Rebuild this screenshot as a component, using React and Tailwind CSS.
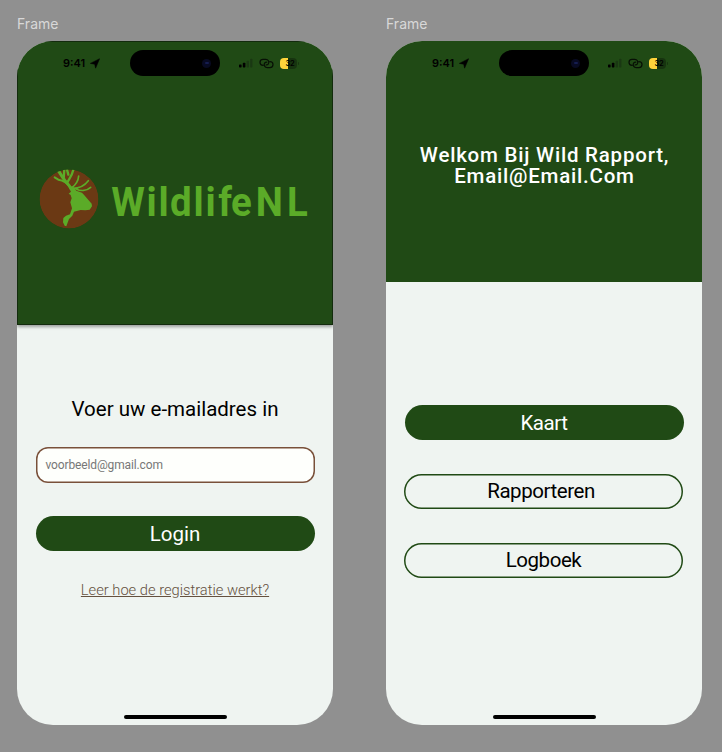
function StatusBar() {
  return (
    <div className="flex h-[44px] items-center">
      <span className="ml-[46px] w-[22px] whitespace-nowrap pt-px font-['Inter',sans-serif] text-[11px] font-semibold leading-none text-black">9:41</span>
      <svg className="ml-[5px] h-[11px] w-[10px]" viewBox="0 0 10 11">
        <path d="M9.600.7 5.600 10.200 4.700 6.200.3 5.400Z" fill="#000" stroke="#000" strokeWidth=".5" strokeLinejoin="round" />
      </svg>
      <div className="ml-[30px] flex h-[26px] w-[90px] items-center justify-end rounded-full bg-black pr-[9px]">
        <span className="flex size-[9px] items-center justify-center rounded-full bg-[#080a22]">
          <span className="h-[2px] w-[4px] rounded-full bg-[#151d50]" />
        </span>
      </div>
      <svg className="ml-[19px] h-[10px] w-[14px]" viewBox="0 0 14 10">
        <rect x="0" y="6.4" width="2.6" height="3" rx=".7" fill="#000" />
        <rect x="3.8" y="4.8" width="2.6" height="4.600" rx=".7" fill="#000" />
        <rect x="7.600" y="2.800" width="2.400" height="6.600" rx=".7" fill="#1a3813" />
        <rect x="11.200" y=".800" width="2.200" height="8.600" rx=".7" fill="#1a3813" />
      </svg>
      <svg className="ml-[6px] h-[11px] w-[15px]" viewBox="0 0 15 11" fill="none" stroke="#071005" strokeWidth="1.250" strokeLinecap="round">
        <path d="M4.300 7.300H4A3 3 0 0 1 4 1.300H6.800A3 3 0 0 1 9.400 5.800Q8.600 6.900 7.200 6.900" />
        <path d="M10.700 3.600H11A3 3 0 0 1 11 9.600H8.200A3 3 0 0 1 5.600 5.100Q6.400 4 7.800 4" />
      </svg>
      <div className="ml-[6px] flex h-[11px] w-[17px] items-center justify-center overflow-hidden rounded-[4px] bg-linear-to-r from-[#ffd43b] from-46% to-[#17340f] to-46% font-['Inter',sans-serif] text-[7.500px] font-semibold leading-none tracking-[-0.300px] text-black">
        <span className="pl-[3px] pt-px">32</span>
      </div>
      <span className="ml-px h-[3px] w-px rounded-r-full bg-[#17340f]" />
    </div>
  );
}

function Phone({ children }) {
  return (
    <section>
      <p className="h-[41px] pt-[15px] font-['Inter',sans-serif] text-[14px] leading-[18px] text-[#d8d8d8]">Frame</p>
      <div className="flex h-[684px] w-[316px] flex-col overflow-hidden rounded-[36px] bg-[#eff4f1]">
        {children}
        <div className="mx-auto mt-auto mb-[6px] h-[4px] w-[103px] shrink-0 rounded-full bg-black" />
      </div>
    </section>
  );
}

function Logo() {
  return (
    <svg className="ml-[21px] mt-[83px] h-[62px] w-[276px] shrink-0" viewBox="38 168 276 62">
      <defs>
        <clipPath id="badge"><circle cx="93" cy="93" r="88.500" /></clipPath>
      </defs>
      <g transform="translate(38 168) scale(.33333)" clipPath="url(#badge)">
        <circle cx="93" cy="93" r="88.500" fill="#6b3914" />
        <path fill="#5bab28" d="M89 52 106 57 115 68 132 74 139 82 161 107 162 115 155 125 142 127 128 126 108 131 103 143 93 153 85 175 80 173 75 163 76 150 84 143 96 139 102 121 97 103 101 91 98 81 92 77 99 71Z" />
        <g fill="none" stroke="#5bab28" strokeLinecap="round" strokeLinejoin="round">
          <path strokeWidth="9" d="M99 62C94 50 83 43 76 31L61 8" />
          <path strokeWidth="7" d="M77 31 79 5M88 43C92 34 101 27 106 5M91 20 87 5" />
          <path strokeWidth="6" d="M96 57C87 43 76 37 61 35L50 28" />
          <path strokeWidth="5" d="M101 59C114 50 121 39 122 24" />
          <path strokeWidth="5" d="M104 61C123 61 139 54 151 38M113 62C128 70 146 69 158 58" />
        </g>
      </g>
      <text x="118.600 156.300 169.100 181.300 206.500 219.300 232.900 246.300 272.800 306.100" y="216" transform="translate(0 0) scale(.9375 1)" fill="#5bab28" className="font-['Roboto',sans-serif] text-[41px] font-bold">WildlifeNL</text>
    </svg>
  );
}

function PillButton({ filled, shifted, children }) {
  return (
    <button className={filled
      ? "flex h-[35px] w-[279px] items-center justify-center rounded-full bg-[#204a15] pt-px text-white"
      : "mr-px flex h-[35px] w-[279px] items-center justify-center rounded-full text-black shadow-[inset_0_0_0_1.500px_#204a15]"}>
      <span className={shifted ? "pr-[5px]" : ""}>{children}</span>
    </button>
  );
}

export default function App() {
  return (
    <main className="flex h-[752px] w-[722px] gap-[53px] overflow-hidden bg-[#909090] pl-[17px] font-['Roboto',sans-serif]">
      <Phone>
        <header className="h-[284px] shrink-0 bg-[#204a15] shadow-[inset_0_0_0_1px_#132b0d,0_2px_3px_rgba(0,0,0,0.35)]">
          <StatusBar />
          <Logo />
        </header>
        <div className="flex flex-col items-center">
          <h1 className="mt-[71px] text-[20.500px] leading-[26px] text-black">Voer uw e-mailadres in</h1>
          <div className="mt-[25px] flex h-[36px] w-[279px] items-center rounded-[12px] bg-[#fefffc] pl-[10px] text-[12px] tracking-[-0.130px] text-[#777] shadow-[inset_0_0_0_1.500px_#79503a]">voorbeeld@gmail.com</div>
          <button className="mt-[33px] flex h-[35px] w-[279px] items-center justify-center rounded-full bg-[#204a15] pt-px text-[20.500px] text-white">Login</button>
          <a className="mt-[29px] text-[14.700px] font-light leading-[20px] text-[#65513f] underline">Leer hoe de registratie werkt?</a>
        </div>
      </Phone>
      <Phone>
        <header className="h-[241px] shrink-0 bg-[#204a15]">
          <StatusBar />
          <h2 className="mt-[60px] pl-px text-center text-[20.500px] font-medium leading-[20.500px] tracking-[0.780px] text-white">Welkom Bij Wild Rapport,<br />Email@Email.Com</h2>
        </header>
        <nav className="mt-[123px] flex flex-col items-center gap-[34px] text-[20.500px] tracking-[-0.450px]">
          <PillButton filled>Kaart</PillButton>
          <PillButton shifted>Rapporteren</PillButton>
          <PillButton>Logboek</PillButton>
        </nav>
      </Phone>
    </main>
  );
}
